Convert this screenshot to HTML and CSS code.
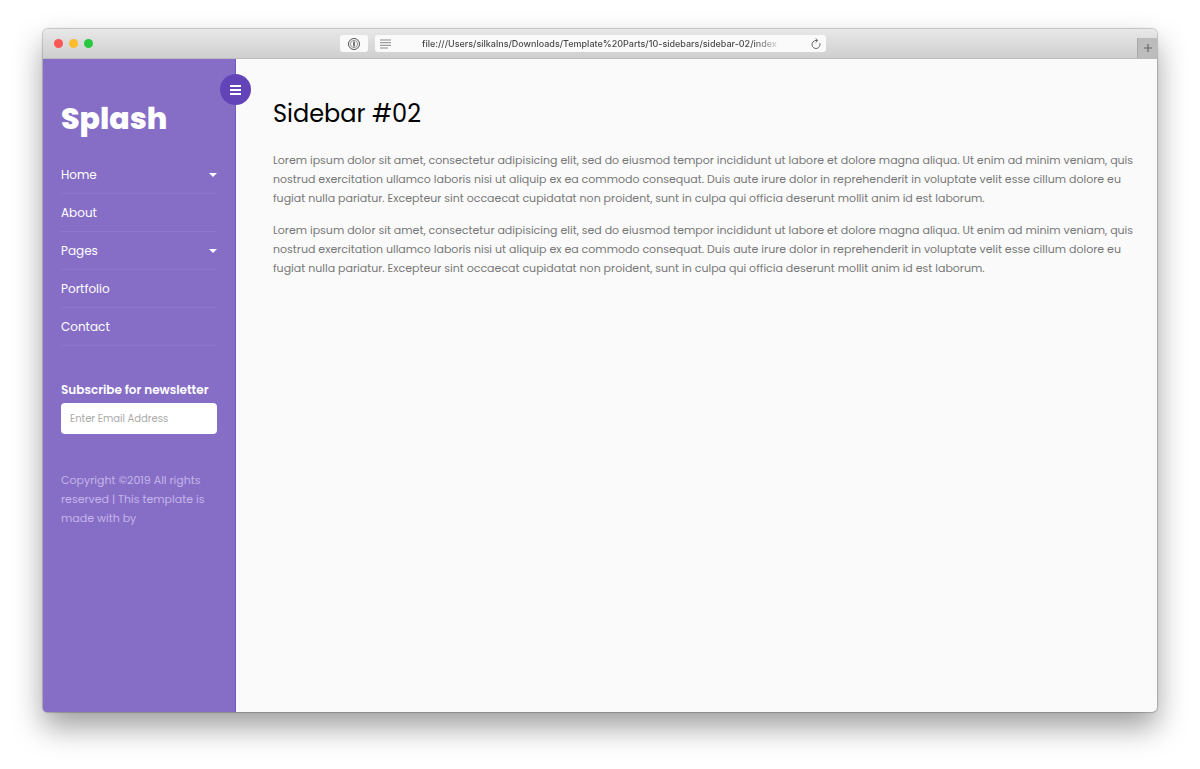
FILE: index.html
```html
<!DOCTYPE html>
<html lang="en">
<head>
<meta charset="utf-8">
<meta name="viewport" content="width=device-width, initial-scale=1">
<title>Sidebar #02</title>
<link rel="stylesheet" href="styles.css">
</head>
<body>
<div class="window">
  <header class="titlebar">
    <div class="lights"><span class="light red"></span><span class="light yellow"></span><span class="light green"></span></div>
    <div class="tools">
      <button class="tool" type="button" aria-label="Password manager">
        <svg width="14" height="14" viewBox="0 0 14 14" fill="none" stroke="#555"><circle cx="7" cy="7" r="5.5" stroke-width="1"/><circle cx="7" cy="7" r="3.6" stroke-width=".6"/><path d="M7 4.5v5" stroke-width="1.6"/></svg>
      </button>
      <div class="address">
        <svg width="12" height="10" viewBox="0 0 12 10" stroke="#888" stroke-width="1"><path d="M0 1h11M0 3.7h11M0 6.3h11M0 9h8"/></svg>
        <span class="url">file:///Users/silkalns/Downloads/Template%20Parts/10-sidebars/sidebar-02/index</span>
        <button class="reload" type="button" aria-label="Reload">
          <svg width="12" height="12" viewBox="0 0 12 12" fill="none" stroke="#666"><path d="M9.8 5.2A4 4 0 1 1 6 2.5h1.5M5.6.4l2.2 2.1-2.2 2.1"/></svg>
        </button>
      </div>
    </div>
    <button class="newtab" type="button" aria-label="New tab">
      <svg width="10" height="10" viewBox="0 0 10 10" stroke="#666"><path d="M5 1v8M1 5h8" stroke-width="1.2"/></svg>
    </button>
  </header>
  <div class="page">
    <nav class="sidebar">
      <button class="toggle" type="button" aria-label="Toggle menu">
        <svg width="12" height="10" viewBox="0 0 12 10" stroke="#fff" stroke-width="2"><path d="M0 1h11M0 5h11M0 9h11"/></svg>
      </button>
      <a class="logo" href="#">Splash</a>
      <ul class="menu">
        <li><a class="drop" href="#">Home</a></li>
        <li><a href="#">About</a></li>
        <li><a class="drop" href="#">Pages</a></li>
        <li><a href="#">Portfolio</a></li>
        <li><a href="#">Contact</a></li>
      </ul>
      <form class="subscribe">
        <label for="email">Subscribe for newsletter</label>
        <input id="email" type="email" placeholder="Enter Email Address">
      </form>
      <p class="copyright">Copyright ©2019 All rights reserved | This template is made with by</p>
    </nav>
    <main class="content">
      <h1>Sidebar #02</h1>
      <p>Lorem ipsum dolor sit amet, consectetur adipisicing elit, sed do eiusmod tempor incididunt ut labore et dolore magna aliqua. Ut enim ad minim veniam, quis nostrud exercitation ullamco laboris nisi ut aliquip ex ea commodo consequat. Duis aute irure dolor in reprehenderit in voluptate velit esse cillum dolore eu fugiat nulla pariatur. Excepteur sint occaecat cupidatat non proident, sunt in culpa qui officia deserunt mollit anim id est laborum.</p>
      <p>Lorem ipsum dolor sit amet, consectetur adipisicing elit, sed do eiusmod tempor incididunt ut labore et dolore magna aliqua. Ut enim ad minim veniam, quis nostrud exercitation ullamco laboris nisi ut aliquip ex ea commodo consequat. Duis aute irure dolor in reprehenderit in voluptate velit esse cillum dolore eu fugiat nulla pariatur. Excepteur sint occaecat cupidatat non proident, sunt in culpa qui officia deserunt mollit anim id est laborum.</p>
    </main>
  </div>
</div>
</body>
</html>
```
FILE: styles.css
```css
* { box-sizing: border-box; }
body {
  margin: 0;
  padding: 29px 43px 57px;
  min-height: 100vh;
  display: flex;
  background: #fff;
  color: #777;
  font: 11px/19px Poppins, Inter, sans-serif;
}
button { border: 0; padding: 0; display: flex; align-items: center; justify-content: center; }
a { color: #fff; text-decoration: none; }
.window {
  flex: 1;
  min-width: 0;
  display: flex;
  flex-direction: column;
  border-radius: 5px;
  background: #fafafa;
  box-shadow: 0 0 1px 1px rgba(0, 0, 0, .2), 0 15px 30px rgba(0, 0, 0, .38);
}
.titlebar {
  height: 30px;
  display: grid;
  grid-template-columns: 1fr 486px 1fr;
  align-items: center;
  border-radius: 5px 5px 0 0;
  border-bottom: 1px solid #bbb;
  background: linear-gradient(#e8e8e8, #cfcfcf);
}
.lights { display: flex; gap: 6px; padding-left: 11px; }
.light { width: 9px; height: 9px; border-radius: 50%; }
.red { background: #fb5753; }
.yellow { background: #fbbc2e; }
.green { background: #27c840; }
.tools { display: flex; gap: 7px; margin-left: -17px; margin-right: 17px; }
.tool { width: 28px; height: 17px; border-radius: 3px; background: #fafafa; }
.address {
  flex: 1;
  min-width: 0;
  height: 17px;
  display: flex;
  align-items: center;
  padding: 0 4px 0 5px;
  border-radius: 3px;
  background: #fafafa;
}
.url {
  margin: 0 auto 0 30px;
  font: 500 9px/17px Inter, sans-serif;
  white-space: nowrap;
  color: transparent;
  background: linear-gradient(90deg, #444 93%, #ccc);
  background-clip: text;
}
.reload { background: none; }
.newtab {
  justify-self: end;
  align-self: end;
  width: 20px;
  height: 20px;
  background: #bcbcbc;
  border-left: 1px solid #aaa;
}
.page { flex: 1; display: flex; }
.sidebar {
  position: relative;
  width: 193px;
  flex: none;
  padding: 36px 18px;
  background: #866ec7;
  border-right: 1px solid #7558bd;
  border-radius: 0 0 0 4px;
}
.toggle {
  position: absolute;
  top: 15px;
  right: -16px;
  width: 31px;
  height: 31px;
  border-radius: 50%;
  background: #6344b8;
}
.logo { display: block; font-size: 30px; line-height: 48px; font-weight: 800; }
.menu { list-style: none; margin: 13px 0 34px; padding: 0; }
.menu a {
  display: flex;
  align-items: center;
  justify-content: space-between;
  height: 38px;
  border-bottom: 1px solid #8e76ce;
  font-size: 12px;
}
.drop::after {
  content: "";
  border: 4px solid transparent;
  border-top-color: #fff;
  border-bottom: 0;
}
.subscribe label {
  display: block;
  margin-bottom: 4px;
  color: #fff;
  font-size: 12px;
  font-weight: 600;
  white-space: nowrap;
}
.subscribe input {
  display: block;
  width: 100%;
  height: 31px;
  padding: 0 9px;
  border: 0;
  border-radius: 4px;
  background: #fff;
  font: 10px Poppins, Inter, sans-serif;
}
.subscribe input::placeholder { color: #aaa; }
.copyright { margin: 37px 0 0; color: #c5b5e8; }
.content { flex: 1; min-width: 0; padding: 36px 20px 36px 37px; }
h1 { margin: 0 0 18px; color: #000; font-size: 24px; line-height: 38px; font-weight: 400; }
.content p { margin: 0 0 13px; }
```
